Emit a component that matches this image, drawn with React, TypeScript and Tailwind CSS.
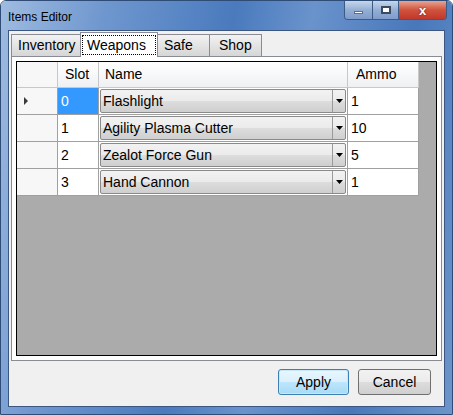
import React from "react"

const rows = [
  { slot: "0", name: "Flashlight", ammo: "1" },
  { slot: "1", name: "Agility Plasma Cutter", ammo: "10" },
  { slot: "2", name: "Zealot Force Gun", ammo: "5" },
  { slot: "3", name: "Hand Cannon", ammo: "1" },
]

function DownArrow() {
  return (
    <svg width="7" height="4" viewBox="0 0 7 4">
      <path d="M0 0 H7 L3.5 4 Z" fill="#000" />
    </svg>
  )
}

export default function App() {
  return (
    <div
      className="w-[453px] h-[415px] flex flex-col rounded-t-[6px] border border-[#2f4c77] overflow-hidden"
      style={{ fontFamily: "'Liberation Sans', Arial, sans-serif" }}
    >
      <div className="flex flex-col flex-1 bg-[linear-gradient(100deg,#9fbbe0_0%,#6f97cf_20%,#4a7abd_45%,#6a93cc_60%,#4877ba_80%,#6d95cb_100%)]">
        {/* title bar */}
        <div className="h-[29px] flex items-start justify-between">
          <div className="pl-[7px] pt-[7px] text-[12px] text-black">Items Editor</div>
          <div className="flex mr-[5px] h-[19px] rounded-b-[4px] border border-t-0 border-[#3d5a84] overflow-hidden">
            <div className="w-[28px] flex items-center justify-center bg-[linear-gradient(#c6d6ec,#94afd4_50%,#7f9ccb)] border-r border-[#3d5a84]">
              <div className="w-[9px] h-[3px] bg-white border border-[#5a6f8f] mt-[5px]" />
            </div>
            <div className="w-[26px] flex items-center justify-center bg-[linear-gradient(#c6d6ec,#94afd4_50%,#7f9ccb)] border-r border-[#3d5a84]">
              <div className="w-[10px] h-[8px] border-2 border-[#3a4a60] bg-white" />
            </div>
            <div className="w-[47px] flex items-center justify-center bg-[linear-gradient(#e8a493,#d0533c_50%,#c0382a)] text-white font-bold text-[13px] leading-none">
              <span className="[text-shadow:0_0_2px_#5a1a10]">x</span>
            </div>
          </div>
        </div>
        {/* client area */}
        <div className="mx-[7px] mb-[7px] flex-1 bg-[#f0f0f0] border border-[#3b5680] flex flex-col">
          <div className="flex items-end pl-[2px] h-[25px]">
            <div className="w-[70px] h-[22px] pl-[6px] pt-[2px] text-[14px] leading-[17px] text-black bg-[linear-gradient(#f2f2f2,#e4e4e4_50%,#d6d6d6)] border border-b-0 border-[#898c95]">
              Inventory
            </div>
            <div className="w-[78px] h-[25px] px-[1px] pt-[2px] bg-white border border-b-0 border-[#898c95] -mb-px -ml-px relative z-10">
              <div className="border border-dotted border-black pl-[4px] text-[14px] leading-[18px] text-black">
                Weapons
              </div>
            </div>
            <div className="w-[53px] h-[22px] pl-[6px] pt-[2px] text-[14px] leading-[17px] text-black bg-[linear-gradient(#f2f2f2,#e4e4e4_50%,#d6d6d6)] border border-b-0 border-[#898c95] -ml-px">
              Safe
            </div>
            <div className="w-[53px] h-[22px] pl-[9px] pt-[2px] text-[14px] leading-[17px] text-black bg-[linear-gradient(#f2f2f2,#e4e4e4_50%,#d6d6d6)] border border-b-0 border-[#898c95] -ml-px">
              Shop
            </div>
          </div>
          <div className="mx-[2px] h-[305px] bg-white border border-[#898c95] p-[4px]">
            <div className="h-full bg-[#ababab] border border-black">
              <div className="grid grid-cols-[41px_41px_249px_71px] w-fit text-[14px] text-black">
                <div className="h-[26px] bg-[#f7f7f7] border-r border-b border-[#c8c8c8]" />
                <div className="h-[26px] bg-[linear-gradient(#ffffff,#f7f8f9_50%,#eef0f2)] border-r border-b border-[#c8c8c8] flex items-center pl-[7px]">
                  Slot
                </div>
                <div className="h-[26px] bg-[linear-gradient(#ffffff,#f7f8f9_50%,#eef0f2)] border-r border-b border-[#c8c8c8] flex items-center pl-[6px]">
                  Name
                </div>
                <div className="h-[26px] bg-[linear-gradient(#ffffff,#f7f8f9_50%,#eef0f2)] border-r border-b border-[#c8c8c8] flex items-center pl-[8px]">
                  Ammo
                </div>
                {rows.map((r, i) => (
                  <React.Fragment key={r.slot}>
                    <div className="h-[27px] bg-[#f7f7f7] border-r border-b border-[#a0a0a0] flex items-center pl-[7px]">
                      {i === 0 && (
                        <svg width="4" height="8" viewBox="0 0 4 8">
                          <path d="M0 0 L4 4 L0 8 Z" fill="#3a3a3a" />
                        </svg>
                      )}
                    </div>
                    <div
                      className={
                        i === 0
                          ? "h-[27px] bg-[#3399ff] text-white border-r border-b border-[#a0a0a0] flex items-center pl-[3px]"
                          : "h-[27px] bg-white border-r border-b border-[#a0a0a0] flex items-center pl-[3px]"
                      }
                    >
                      {r.slot}
                    </div>
                    <div className="h-[27px] bg-white border-r border-b border-[#a0a0a0] p-px">
                      <div className="h-full flex rounded-[2px] border border-[#8a8a8a] bg-[linear-gradient(#f2f2f2,#ebebeb_50%,#dddddd_51%,#cfcfcf)]">
                        <div className="flex-1 flex items-center pl-[2px]">{r.name}</div>
                        <div className="w-[13px] border-l border-[#9a9a9a] flex items-center justify-center">
                          <DownArrow />
                        </div>
                      </div>
                    </div>
                    <div className="h-[27px] bg-white border-r border-b border-[#a0a0a0] flex items-center pl-[3px]">
                      {r.ammo}
                    </div>
                  </React.Fragment>
                ))}
              </div>
            </div>
          </div>
          <div className="flex justify-end gap-[9px] pr-[13px] pt-[8px] text-[14px] text-black">
            <div className="w-[71px] h-[26px] rounded-[3px] border border-[#3c7fb1] bg-[linear-gradient(#eaf6fd,#d9f0fc_50%,#bee6fd_51%,#a7d9f5)] shadow-[inset_0_0_0_1px_#c8e8fa] flex items-center justify-center">
              Apply
            </div>
            <div className="w-[73px] h-[26px] rounded-[3px] border border-[#707070] bg-[linear-gradient(#f2f2f2,#ebebeb_50%,#dddddd_51%,#cfcfcf)] flex items-center justify-center">
              Cancel
            </div>
          </div>
        </div>
      </div>
    </div>
  )
}
